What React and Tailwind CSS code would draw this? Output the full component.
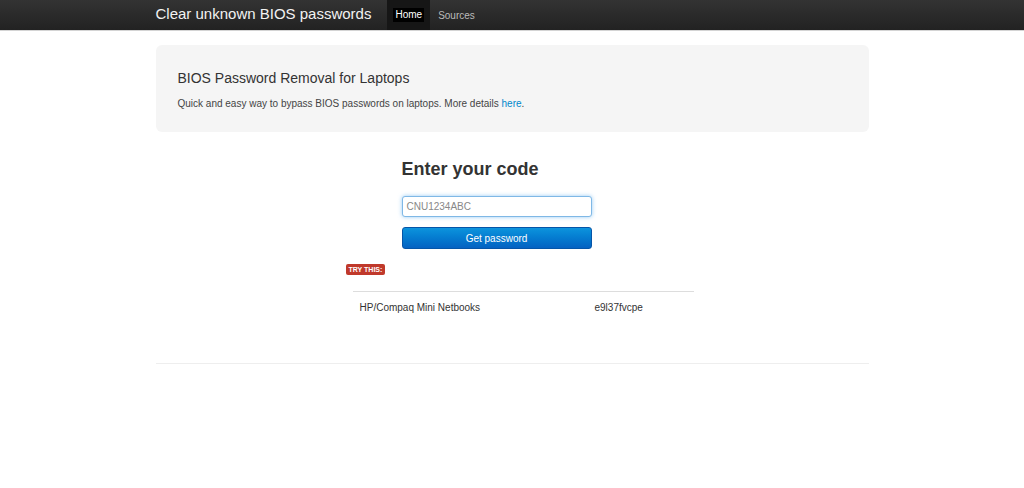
export default function App() {
    return (
        <div className="min-h-[488px] bg-white text-[#333]" style={{ fontFamily: '"Liberation Sans", Arial, sans-serif' }}>
            {/* Navbar */}
            <div className="h-[31px] bg-gradient-to-b from-[#333333] to-[#222222] border-b border-[#d4d4d4]">
                <div className="w-[713px] mx-auto flex items-stretch h-[30px]">
                    <div className="text-[15px] text-[#f2f2f2] leading-[30px] mr-[16px] -mt-[1px]">
                        Clear unknown BIOS passwords
                    </div>
                    <div className="flex items-stretch">
                        <div className="bg-[#161616] px-[6px] flex items-center">
                            <span className="bg-black text-white text-[10px] leading-[14px] px-[2px]">Home</span>
                        </div>
                        <div className="px-[8px] flex items-center text-[10px] text-[#bbbbbb]">Sources</div>
                    </div>
                </div>
            </div>

            <div className="w-[713px] mx-auto pt-[14px]">
                {/* Hero */}
                <div className="bg-[#f5f5f5] rounded-[6px] h-[87px] px-[22px] pt-[24px]">
                    <h1 className="text-[14px] leading-[18px] text-[#333]">BIOS Password Removal for Laptops</h1>
                    <p className="text-[10px] leading-[14px] mt-[10px] text-[#444]">
                        Quick and easy way to bypass BIOS passwords on laptops. More details{' '}
                        <a className="text-[#0088cc]">here</a>.
                    </p>
                </div>

                {/* Form */}
                <div className="w-[190px] ml-[246px] mt-[26px]">
                    <h2 className="text-[18px] leading-[22px] font-bold text-[#333]">Enter your code</h2>
                    <div className="mt-[16px] h-[21px] border border-[#7fb8e6] rounded-[3px] shadow-[0_0_4px_rgba(82,168,236,0.6)] bg-white flex items-center px-[4px] text-[10px] text-[#888]">
                        CNU1234ABC
                    </div>
                    <button className="mt-[10px] w-full h-[22px] rounded-[3px] bg-gradient-to-b from-[#0d94dd] to-[#0562c2] border border-[#0555a8] text-white text-[10px]">
                        Get password
                    </button>
                </div>

                <div className="ml-[190px] mt-[6px]">
                    <span className="inline-block bg-[#c0392b] text-white text-[7px] font-bold leading-[11px] px-[3px] rounded-[2px]">
                        TRY THIS:
                    </span>
                </div>

                <div className="w-[341px] ml-[197px] mt-[12px] border-t border-[#dddddd]">
                    <div className="flex text-[10px] text-[#333] pt-[8px] pl-[7px]">
                        <span className="w-[235px]">HP/Compaq Mini Netbooks</span>
                        <span>e9l37fvcpe</span>
                    </div>
                </div>

                <div className="mt-[48px] border-t border-[#eeeeee]"></div>
            </div>
        </div>
    )
}
